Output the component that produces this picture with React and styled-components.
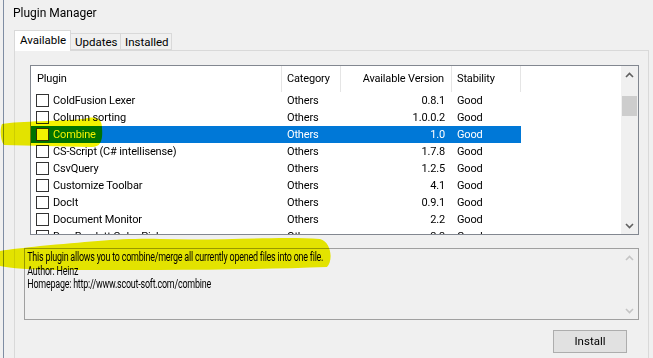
import React from 'react';
import styled, { createGlobalStyle } from 'styled-components';

const Global = createGlobalStyle`
  html, body { margin: 0; padding: 0; background: #f0f0f0; }
  body { font-family: Roboto, "Liberation Sans", sans-serif; color: #000; }
  * { box-sizing: border-box; }
`;

const Screen = styled.div`
  position: relative;
  width: 653px;
  height: 358px;
  overflow: hidden;
  background: #f0f0f0;
  padding-left: 3px;
`;

const Window = styled.div`
  height: 100%;
  border-left: 1px solid #7f8da3;
  display: flex;
  flex-direction: column;
`;

const Title = styled.div`
  height: 30px;
  padding-left: 9px;
  font-size: 12px;
  line-height: 27px;
`;

const TabRow = styled.div`
  display: flex;
  align-items: flex-end;
  height: 20px;
  margin-left: 10px;
  position: relative;
  z-index: 1;
`;

const Tab = styled.div`
  height: ${p => (p.$active ? '21px' : '17px')};
  margin-bottom: ${p => (p.$active ? '-1px' : '0')};
  margin-left: ${p => (p.$first ? '0' : '-1px')};
  width: ${p => p.$w}px;
  padding-left: ${p => (p.$active ? '5px' : '4px')};
  border: 1px solid #d9d9d9;
  border-bottom: ${p => (p.$active ? 'none' : '1px solid #d9d9d9')};
  background: ${p => (p.$active ? '#ffffff' : '#f0f0f0')};
  font-size: 11.5px;
  line-height: ${p => (p.$active ? '18px' : '16px')};
  white-space: nowrap;
`;

const Panel = styled.div`
  flex: 1;
  margin: 0 4px 0 10px;
  border: 1px solid #d9d9d9;
  border-bottom: none;
  background: #f0f0f0;
  padding-top: 14px;
  display: flex;
  flex-direction: column;
`;

const ListBox = styled.div`
  height: 170px;
  margin: 0 9px 0 15px;
  border: 1px solid #828790;
  background: #fff;
  display: flex;
  overflow: hidden;
`;

const Table = styled.div`
  flex: 1;
  overflow: hidden;
  font-size: 11px;
  letter-spacing: -0.15px;
`;

const cols = '251px 59px 111px 69px';

const HeaderRow = styled.div`
  display: grid;
  grid-template-columns: ${cols};
  height: 26px;
`;

const HeadCell = styled.div`
  border-right: 1px solid #e5e5e5;
  line-height: 26px;
  padding-left: ${p => p.$pl || 5}px;
  padding-right: ${p => p.$pr || 0}px;
  text-align: ${p => p.$align || 'left'};
  white-space: nowrap;
`;

const Row = styled.div`
  display: grid;
  grid-template-columns: ${cols};
  height: 17px;
  line-height: 17px;
  background: ${p => (p.$sel ? '#0078d7' : 'transparent')};
  color: ${p => (p.$sel ? '#fff' : '#000')};
  width: 490px;
`;

const NameCell = styled.div`
  display: flex;
  align-items: center;
  padding-left: 5px;
  gap: 4px;
  white-space: nowrap;
`;

const Check = styled.span`
  width: 13px;
  height: 13px;
  border: 1px solid #333;
  background: #fff;
  flex: none;
`;

const Cell = styled.div`
  padding-left: ${p => p.$pl || 5}px;
  padding-right: ${p => p.$pr || 0}px;
  text-align: ${p => p.$align || 'left'};
  white-space: nowrap;
`;

const ScrollBar = styled.div`
  width: 17px;
  flex: none;
  background: #f0f0f0;
  display: flex;
  flex-direction: column;
`;

const ArrowBtn = styled.div`
  height: 17px;
  display: flex;
  align-items: center;
  justify-content: center;
  flex: none;
`;

const Track = styled.div`
  flex: 1;
  padding: 13px 1px 0 1px;
`;

const Thumb = styled.div`
  height: 20px;
  background: #cdcdcd;
`;

const Desc = styled.div`
  height: 72px;
  margin: 13px 9px 0 9px;
  border: 1px solid #a0a0a0;
  background: #f0f0f0;
  display: flex;
  overflow: hidden;
`;

const DescText = styled.div`
  flex: 1;
  padding: 2px 0 0 3px;
  font-size: 12px;
  line-height: 13.5px;
  letter-spacing: -0.3px;
  white-space: nowrap;
  transform: scaleX(0.746);
  transform-origin: left top;
`;

const Footer = styled.div`
  display: flex;
  justify-content: flex-end;
  padding: 10px 21px 0 0;
`;

const Button = styled.div`
  width: 74px;
  height: 23px;
  background: #e1e1e1;
  border: 1px solid #adadad;
  font-size: 11.5px;
  line-height: 21px;
  text-align: center;
`;

const Marker = styled.svg`
  position: absolute;
  left: 0;
  top: 0;
  pointer-events: none;
  mix-blend-mode: multiply;
`;

const Chevron = ({ up, color }) => (
  <svg width="9" height="6" viewBox="0 0 9 6">
    <path
      d={up ? 'M1 5 L4.5 1.5 L8 5' : 'M1 1 L4.5 4.5 L8 1'}
      fill="none"
      stroke={color}
      strokeWidth="1.6"
    />
  </svg>
);

const plugins = [
  ['ColdFusion Lexer', 'Others', '0.8.1', 'Good'],
  ['Column sorting', 'Others', '1.0.0.2', 'Good'],
  ['Combine', 'Others', '1.0', 'Good', true],
  ['CS-Script (C# intellisense)', 'Others', '1.7.8', 'Good'],
  ['CsvQuery', 'Others', '1.2.5', 'Good'],
  ['Customize Toolbar', 'Others', '4.1', 'Good'],
  ['DocIt', 'Others', '0.9.1', 'Good'],
  ['Document Monitor', 'Others', '2.2', 'Good'],
  ['Don Rowlett Color Picker', 'Others', '2.3', 'Good'],
];

export default function App() {
  return (
    <>
      <Global />
      <Screen>
        <Window>
          <Title>Plugin Manager</Title>
          <TabRow>
            <Tab $active $first $w={57}>Available</Tab>
            <Tab $w={51}>Updates</Tab>
            <Tab $w={52}>Installed</Tab>
          </TabRow>
          <Panel>
            <ListBox>
              <Table>
                <HeaderRow>
                  <HeadCell $pl={6}>Plugin</HeadCell>
                  <HeadCell>Category</HeadCell>
                  <HeadCell $align="right" $pr={7}>Available Version</HeadCell>
                  <HeadCell>Stability</HeadCell>
                </HeaderRow>
                {plugins.map(([name, cat, ver, stab, sel]) => (
                  <Row key={name} $sel={sel}>
                    <NameCell>
                      <Check />
                      {name}
                    </NameCell>
                    <Cell>{cat}</Cell>
                    <Cell $align="right" $pr={7}>{ver}</Cell>
                    <Cell>{stab}</Cell>
                  </Row>
                ))}
              </Table>
              <ScrollBar>
                <ArrowBtn><Chevron up color="#606060" /></ArrowBtn>
                <Track><Thumb /></Track>
                <ArrowBtn><Chevron color="#606060" /></ArrowBtn>
              </ScrollBar>
            </ListBox>
            <Desc>
              <DescText>
                This plugin allows you to combine/merge all currently opened files into one file.
                <br />
                Author: Heinz
                <br />
                Homepage: http://www.scout-soft.com/combine
              </DescText>
              <ScrollBar>
                <ArrowBtn><Chevron up color="#c5c5c5" /></ArrowBtn>
                <Track />
                <ArrowBtn><Chevron color="#c5c5c5" /></ArrowBtn>
              </ScrollBar>
            </Desc>
            <Footer>
              <Button>Install</Button>
            </Footer>
          </Panel>
        </Window>
        <Marker width="653" height="358" viewBox="0 0 653 358">
          <path
            d="M2 124 C20 121 60 121 84 119 C94 116 102 117 102 128 C103 140 101 148 90 147 C60 146 30 146 4 145 C0 140 0 128 2 124 Z"
            fill="#f2f200"
          />
          <path
            d="M0 251 C10 249 25 248 40 246 C90 242 120 238 160 239 C220 241 280 236 320 239 C332 242 333 262 327 267 C250 270 150 270 60 270 C30 270 10 268 0 266 Z"
            fill="#f2f200"
          />
        </Marker>
      </Screen>
    </>
  );
}
